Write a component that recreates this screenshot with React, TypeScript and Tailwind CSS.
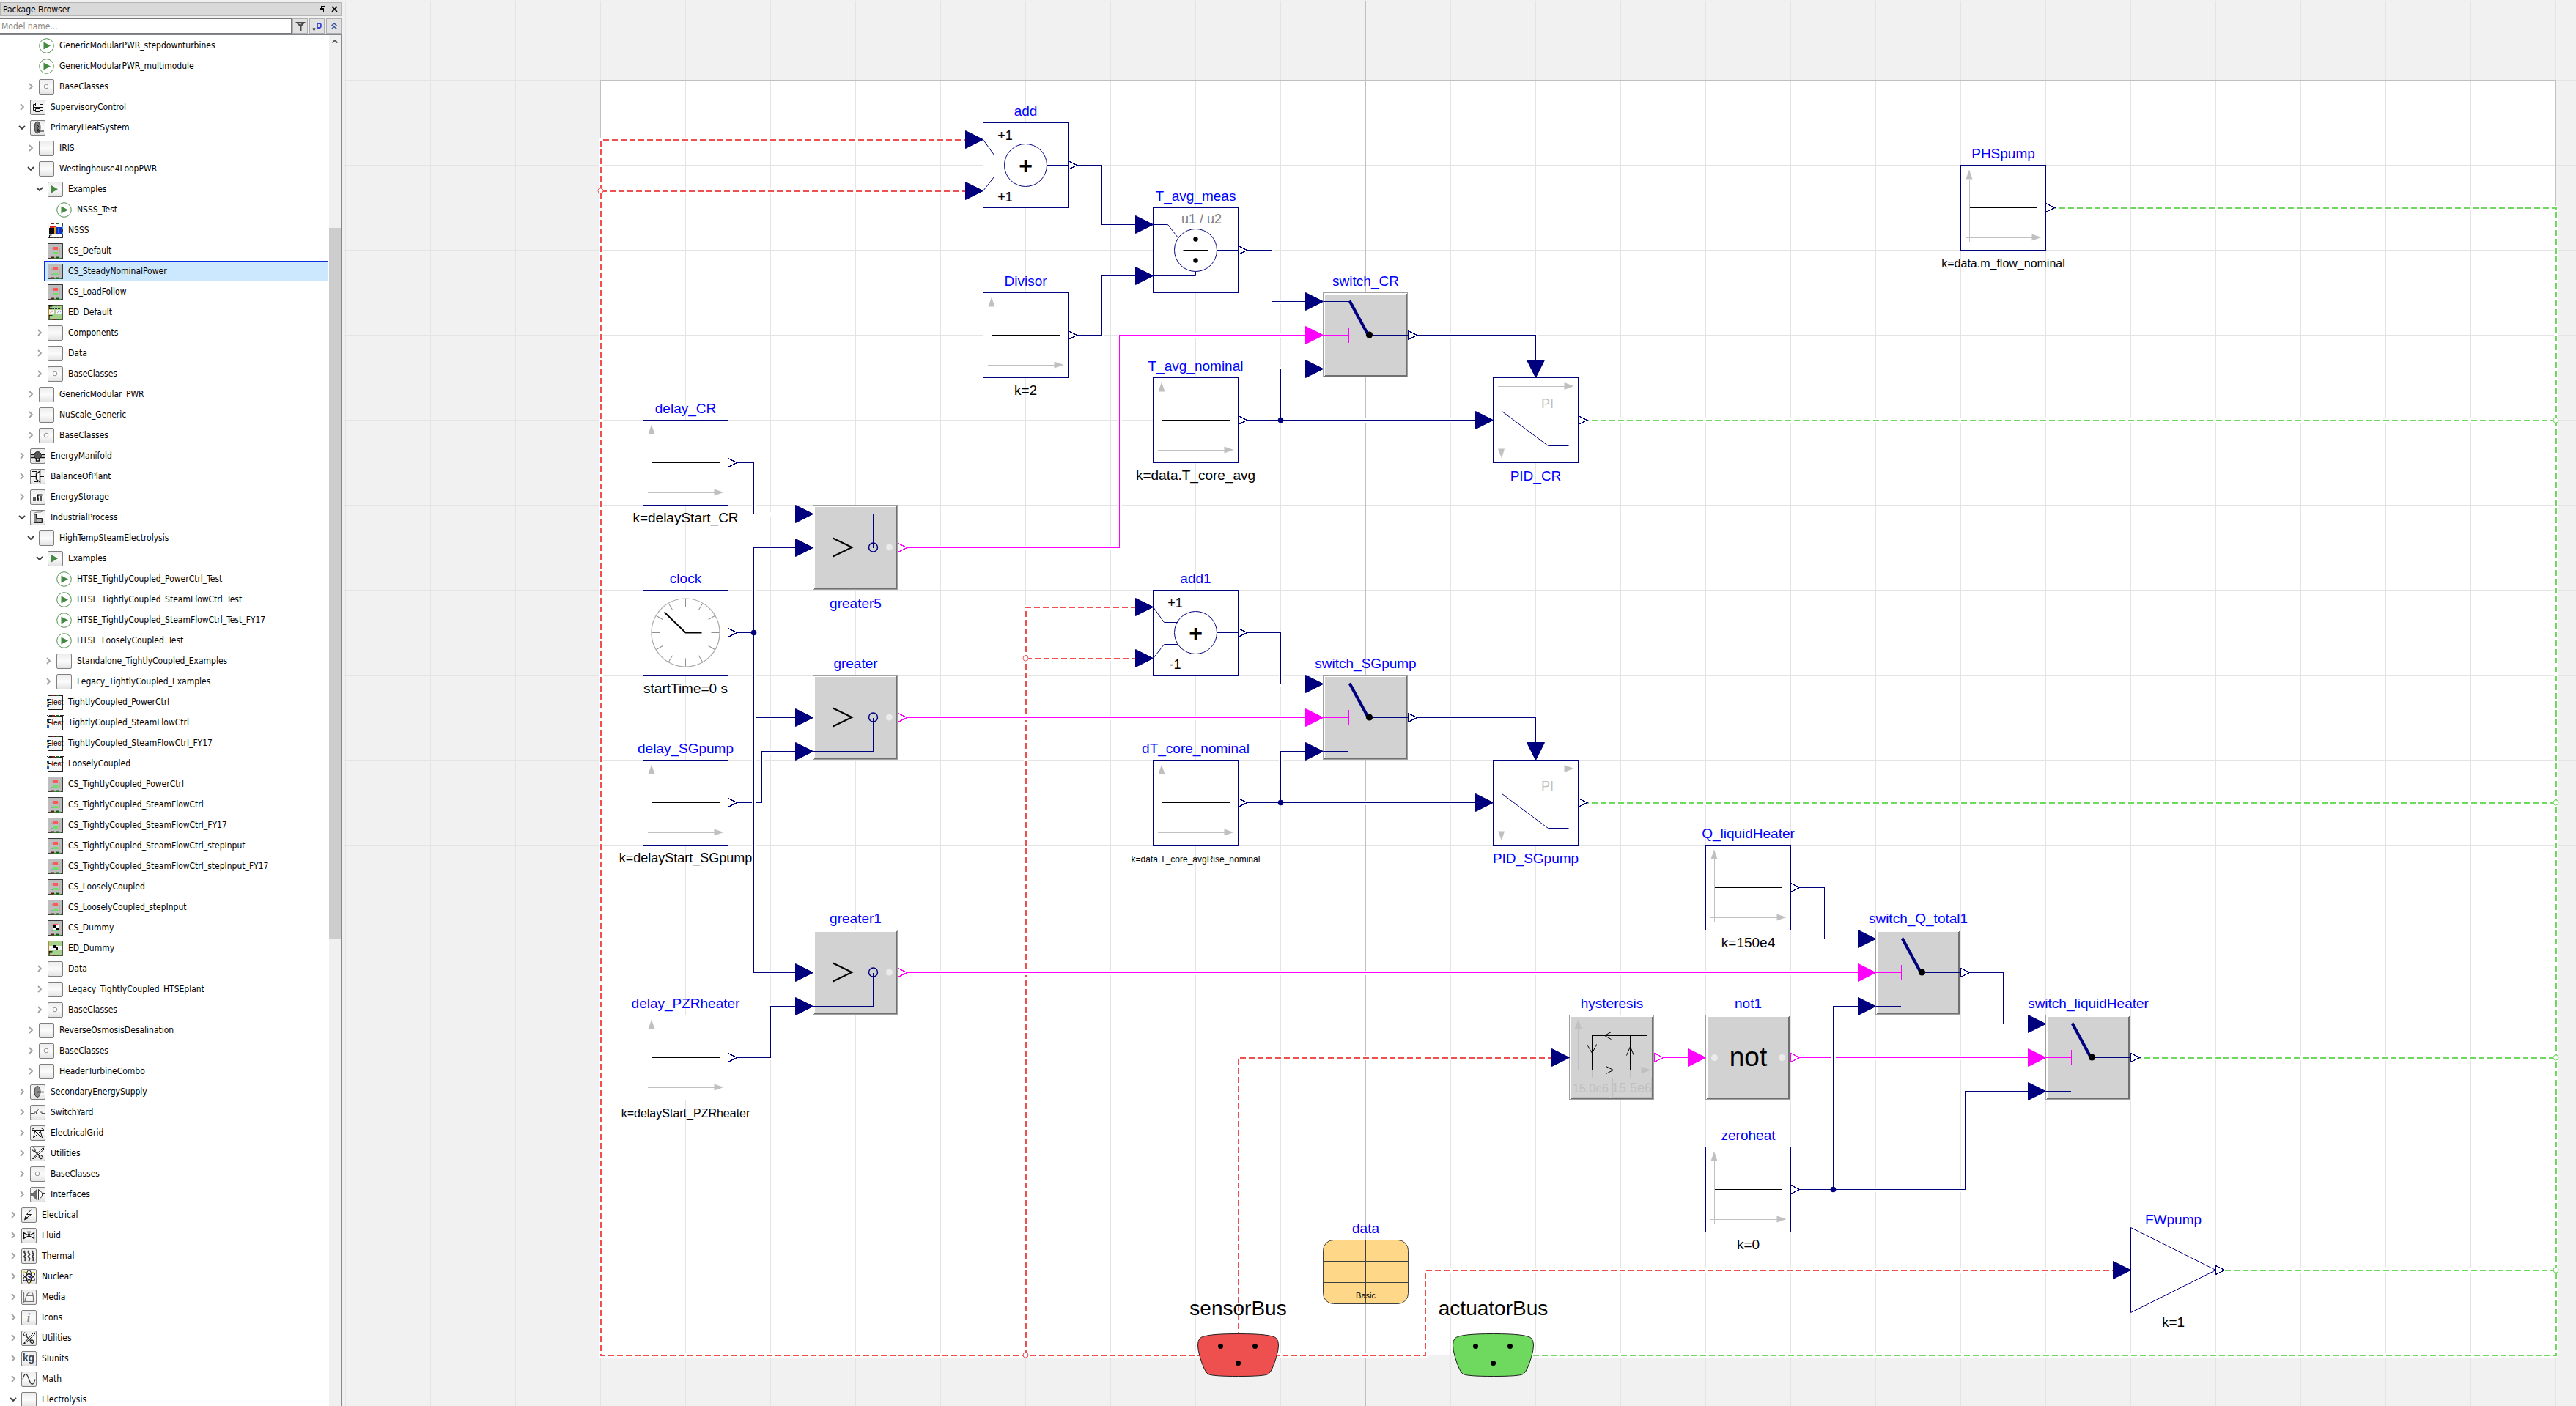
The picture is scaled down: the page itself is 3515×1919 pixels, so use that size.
import React from "react";

/* ------------------------------------------------------------------ */
/* Package browser                                                     */
/* ------------------------------------------------------------------ */

type IconKind =
  | "run" | "base" | "empty" | "supervisory" | "primary" | "examples" | "nsss" | "cs" | "ed"
  | "manifold" | "plant" | "storage" | "industrial" | "elect" | "csDummy" | "edDummy"
  | "supply" | "switch" | "grid" | "tools" | "interfaces" | "electrical" | "fluid"
  | "thermal" | "nuclear" | "media" | "info" | "units" | "math";

type Row = { d: 1 | 2 | 3 | 4 | 5; a: "" | ">" | "v"; i: IconKind; t: string; sel?: boolean };

const r = (d: Row["d"], a: Row["a"], i: IconKind, t: string, sel?: boolean): Row => ({ d, a, i, t, sel });

const rows: Row[] = [
  r(3, "", "run", "GenericModularPWR_stepdownturbines"),
  r(3, "", "run", "GenericModularPWR_multimodule"),
  r(3, ">", "base", "BaseClasses"),
  r(2, ">", "supervisory", "SupervisoryControl"),
  r(2, "v", "primary", "PrimaryHeatSystem"),
  r(3, ">", "empty", "IRIS"),
  r(3, "v", "empty", "Westinghouse4LoopPWR"),
  r(4, "v", "examples", "Examples"),
  r(5, "", "run", "NSSS_Test"),
  r(4, "", "nsss", "NSSS"),
  r(4, "", "cs", "CS_Default"),
  r(4, "", "cs", "CS_SteadyNominalPower", true),
  r(4, "", "cs", "CS_LoadFollow"),
  r(4, "", "ed", "ED_Default"),
  r(4, ">", "empty", "Components"),
  r(4, ">", "empty", "Data"),
  r(4, ">", "base", "BaseClasses"),
  r(3, ">", "empty", "GenericModular_PWR"),
  r(3, ">", "empty", "NuScale_Generic"),
  r(3, ">", "base", "BaseClasses"),
  r(2, ">", "manifold", "EnergyManifold"),
  r(2, ">", "plant", "BalanceOfPlant"),
  r(2, ">", "storage", "EnergyStorage"),
  r(2, "v", "industrial", "IndustrialProcess"),
  r(3, "v", "empty", "HighTempSteamElectrolysis"),
  r(4, "v", "examples", "Examples"),
  r(5, "", "run", "HTSE_TightlyCoupled_PowerCtrl_Test"),
  r(5, "", "run", "HTSE_TightlyCoupled_SteamFlowCtrl_Test"),
  r(5, "", "run", "HTSE_TightlyCoupled_SteamFlowCtrl_Test_FY17"),
  r(5, "", "run", "HTSE_LooselyCoupled_Test"),
  r(5, ">", "empty", "Standalone_TightlyCoupled_Examples"),
  r(5, ">", "empty", "Legacy_TightlyCoupled_Examples"),
  r(4, "", "elect", "TightlyCoupled_PowerCtrl"),
  r(4, "", "elect", "TightlyCoupled_SteamFlowCtrl"),
  r(4, "", "elect", "TightlyCoupled_SteamFlowCtrl_FY17"),
  r(4, "", "elect", "LooselyCoupled"),
  r(4, "", "cs", "CS_TightlyCoupled_PowerCtrl"),
  r(4, "", "cs", "CS_TightlyCoupled_SteamFlowCtrl"),
  r(4, "", "cs", "CS_TightlyCoupled_SteamFlowCtrl_FY17"),
  r(4, "", "cs", "CS_TightlyCoupled_SteamFlowCtrl_stepInput"),
  r(4, "", "cs", "CS_TightlyCoupled_SteamFlowCtrl_stepInput_FY17"),
  r(4, "", "cs", "CS_LooselyCoupled"),
  r(4, "", "cs", "CS_LooselyCoupled_stepInput"),
  r(4, "", "csDummy", "CS_Dummy"),
  r(4, "", "edDummy", "ED_Dummy"),
  r(4, ">", "empty", "Data"),
  r(4, ">", "empty", "Legacy_TightlyCoupled_HTSEplant"),
  r(4, ">", "base", "BaseClasses"),
  r(3, ">", "empty", "ReverseOsmosisDesalination"),
  r(3, ">", "base", "BaseClasses"),
  r(3, ">", "empty", "HeaderTurbineCombo"),
  r(2, ">", "supply", "SecondaryEnergySupply"),
  r(2, ">", "switch", "SwitchYard"),
  r(2, ">", "grid", "ElectricalGrid"),
  r(2, ">", "tools", "Utilities"),
  r(2, ">", "base", "BaseClasses"),
  r(2, ">", "interfaces", "Interfaces"),
  r(1, ">", "electrical", "Electrical"),
  r(1, ">", "fluid", "Fluid"),
  r(1, ">", "thermal", "Thermal"),
  r(1, ">", "nuclear", "Nuclear"),
  r(1, ">", "media", "Media"),
  r(1, ">", "info", "Icons"),
  r(1, ">", "tools", "Utilities"),
  r(1, ">", "units", "SIunits"),
  r(1, ">", "math", "Math"),
  r(1, "v", "empty", "Electrolysis"),
];

const indent: Record<Row["d"], string> = { 1: "ml-3", 2: "ml-6", 3: "ml-9", 4: "ml-12", 5: "ml-[60px]" };

const Folder = () => (
  <>
    <rect x="0.5" y="0.5" width="20" height="20" rx="1.5" fill="url(#folder)" stroke="#808080" />
  </>
);

const CsBody = () => (
  <>
    <rect x="0.5" y="0.5" width="20" height="20" fill="#bdbdbd" stroke="#3a3a3a" />
    <path d="M7 7H4.500V14.500H7" fill="none" stroke="#9aa0b4" />
    <path d="M14 7h2.500V14.500H14" fill="none" stroke="#b4b09a" />
    <rect x="7" y="5" width="7" height="4" fill="#f95a5a" />
    <rect x="7" y="12" width="7" height="3" fill="#6ee06a" />
    <path d="M4 20h14" stroke="#4fd048" />
    <path d="M5 19.500h4" stroke="#5a1a1a" strokeWidth="2" />
    <path d="M11 19.500h4" stroke="#1f4d1f" strokeWidth="2" />
  </>
);

const EdBody = () => (
  <>
    <rect x="0.5" y="0.5" width="20" height="20" fill="#a8d08d" stroke="#4c5a40" />
    <path d="M1.500 1v19" stroke="#b08a30" strokeWidth="1" />
    <text x="1" y="20" fontSize="9" fill="#000" className="font-['Liberation_Sans']">E</text>
    <path d="M7 20h4" stroke="#7a2020" strokeWidth="2" />
    <path d="M12 20h4" stroke="#206020" strokeWidth="2" />
  </>
);

function NodeIcon({ kind }: { kind: IconKind }) {
  const line = { fill: "none", stroke: "#111", strokeWidth: 1 } as const;
  let body: React.ReactNode = null;
  switch (kind) {
    case "run":
      body = (
        <>
          <circle cx="10.500" cy="10.500" r="9.800" fill="#fff" stroke="#4c8f4a" />
          <path d="M6.500 5.500v10l9.500-5z" fill="#458a42" />
        </>
      );
      break;
    case "empty":
      body = <Folder />;
      break;
    case "base":
      body = <><Folder /><circle cx="10" cy="10" r="2.800" fill="#fff" stroke="#909090" /></>;
      break;
    case "examples":
      body = <><Folder /><path d="M5 5v10.500l9-5.200z" fill="#458a42" /></>;
      break;
    case "supervisory":
      body = (
        <>
          <Folder />
          <path d="M7.500 4.500h6v4h-6zM7.500 12.500h6v4h-6zM7.500 6.500H4.500V14.500H7.500M13.500 6.500H17.500V14.500H13.500M5 10.500h12" {...line} />
        </>
      );
      break;
    case "primary":
      body = (
        <>
          <Folder />
          <ellipse cx="10" cy="10" rx="4" ry="8" fill="#7a7a7a" stroke="#333" />
          <path d="M19 6.500h-9l2 2.500-3 2 3 2-2 2h9" {...line} />
        </>
      );
      break;
    case "nsss":
      body = (
        <>
          <rect x="0.5" y="0.5" width="20" height="20" fill="#fff" stroke="#333" />
          <path d="M5 1h4" stroke="#7a2020" strokeWidth="2" />
          <path d="M12 1h4" stroke="#206020" strokeWidth="2" />
          <path d="M3 6h9" stroke="#e02020" strokeWidth="2" />
          <rect x="2" y="7" width="7" height="8" fill="#0b0b0b" />
          <rect x="9" y="6" width="3" height="9" fill="#e0a020" />
          <rect x="12" y="6" width="7" height="9" fill="#1030c0" />
          <path d="M15 7v7" stroke="#60b0ff" />
          <path d="M19 5h2v3h-2zM19 13h2v3h-2z" fill="#3aa0ff" />
          <path d="M2.500 21v-4h3" {...line} />
          <path d="M7 20.500h10" stroke="#555" strokeDasharray="2 2" />
        </>
      );
      break;
    case "cs":
      body = <CsBody />;
      break;
    case "csDummy":
      body = (
        <>
          <CsBody />
          <rect x="7" y="6" width="8" height="8" fill="#fff" />
          <path d="M7 6h4v4h-4zM11 10h4v4h-4z" fill="#000" />
          <path d="M15.500 6v8" stroke="#d8d020" />
        </>
      );
      break;
    case "ed":
      body = (
        <>
          <EdBody />
          <rect x="2" y="7" width="7" height="6" fill="#fdf3f0" />
          <rect x="12" y="7" width="7" height="6" fill="#f3f2ff" />
          <path d="M3 11l3-2 2 1" stroke="#f0a0a0" fill="none" />
          <path d="M13 11l3-3 2 2" stroke="#a0a0f0" fill="none" />
          <text x="1" y="6" fontSize="9" fill="#000" className="font-['Liberation_Sans']">E</text>
          <path d="M8 5.500h10" stroke="#333" strokeDasharray="1 1" />
        </>
      );
      break;
    case "edDummy":
      body = (
        <>
          <EdBody />
          <rect x="2" y="7" width="17" height="5" fill="#f6f0fa" />
          <path d="M7 6h4v4h-4zM11 9h3v4h-3z" fill="#000" />
          <path d="M15.500 7v5" stroke="#d8d020" />
        </>
      );
      break;
    case "manifold":
      body = (
        <>
          <Folder />
          <circle cx="10.500" cy="9.500" r="5" fill="#555" stroke="#222" />
          <path d="M1 8.500h4M1 12.500h6M14 12.500h6M16 8.500h4M8.500 13v4h4v-4" {...line} strokeWidth={1.5} />
        </>
      );
      break;
    case "plant":
      body = (
        <>
          <Folder />
          <path d="M8.500 7l5-4v15l-5-4z" fill="#fff" stroke="#111" strokeWidth="1.500" />
          <path d="M3 3.500h6V7M1 10.500h7M14 10.500h5M5 17.500h6" {...line} />
        </>
      );
      break;
    case "storage":
      body = (
        <>
          <Folder />
          <path d="M4 11h4v5H4zM9 12h3v4H9zM13 9h3v7h-3z" fill="#555" />
          <path d="M10.500 14V7.500h6" {...line} strokeWidth={2} />
        </>
      );
      break;
    case "industrial":
      body = (
        <>
          <Folder />
          <path d="M5.500 17.500V6h3v5.500h8v6z" fill="#8a8a8a" stroke="#222" />
          <path d="M6 4l4-1 4 0 3-1" stroke="#888" fill="none" />
          <rect x="9" y="12.500" width="6" height="3" fill="#bbb" />
        </>
      );
      break;
    case "elect":
      body = (
        <>
          <rect x="0.5" y="1.5" width="20" height="19" fill="#f4f6f8" stroke="#222" />
          <path d="M-1 0.500h23" stroke="#222" strokeDasharray="2 1" />
          <path d="M6 1h4" stroke="#7a2020" strokeWidth="2" />
          <path d="M12 1h4" stroke="#206020" strokeWidth="2" />
          <path d="M-1 6h3v3h-3zM-1 14h3v3h-3z" fill="#1a5fc0" />
          <text x="-1" y="14" fontSize="10" fill="#000" className="font-['Liberation_Sans']">Elect</text>
          <circle cx="6" cy="11" r="1" fill="#d02020" />
          <circle cx="17" cy="11" r="1" fill="#d02020" />
          <path d="M4.500 15v5.500M6 20.500h9" stroke="#222" strokeDasharray="3 1" />
        </>
      );
      break;
    case "supply":
      body = (
        <>
          <Folder />
          <ellipse cx="10" cy="10" rx="4" ry="7.500" fill="#8c8c8c" stroke="#333" />
          <path d="M10 10.500h9" {...line} strokeWidth={1.5} />
        </>
      );
      break;
    case "switch":
      body = (
        <>
          <Folder />
          <path d="M1 11.500h5M8.500 10l3-4M16 11.500h4" fill="none" stroke="#555" />
          <rect x="6" y="10" width="2.500" height="2.500" fill="#fff" stroke="#555" />
          <rect x="13.500" y="10" width="2.500" height="2.500" fill="#fff" stroke="#555" />
        </>
      );
      break;
    case "grid":
      body = (
        <>
          <Folder />
          <path d="M2.500 7V5.500L6 3.500h9l3.500 2V7M3 6.500h15M7 7L4.500 17M14 7l2.500 10M7 8l8 8M14 8l-8 8M7 7h7" {...line} />
        </>
      );
      break;
    case "tools":
      body = (
        <>
          <Folder />
          <path d="M3.500 17.500L16.500 3.500l2-.5v2L5 17.500z" fill="#fff" stroke="#111" />
          <path d="M6 7l7 7" stroke="#333" strokeWidth="1.500" />
          <path d="M2.500 3.500l1.500 3.500 3 .5.500-2.500-3-2.500" {...line} />
          <rect x="12.500" y="13" width="4" height="4.500" rx="1" fill="#ddd" stroke="#111" transform="rotate(-45 14.500 15)" />
        </>
      );
      break;
    case "interfaces":
      body = (
        <>
          <Folder />
          <path d="M1 8h3l5-5v15l-5-5H1z" fill="#6b6b6b" />
          <path d="M11.500 3.500l5 4.500v5l-5 4.500zM16.500 8.500H20M16.500 12.500H20" fill="#fff" stroke="#333" />
        </>
      );
      break;
    case "electrical":
      body = (
        <>
          <Folder />
          <path d="M14 2.500L7.500 9.500h6L6.500 15" {...line} />
          <path d="M4 17.500l1.500-6 4 3.500z" fill="#111" />
        </>
      );
      break;
    case "fluid":
      body = (
        <>
          <Folder />
          <path d="M3.500 6.500v8l14-8v8z M10.500 10V5.500M8 5.500h5" fill="none" stroke="#111" strokeWidth="1.300" />
          <circle cx="10.500" cy="9" r="1.800" fill="#222" />
        </>
      );
      break;
    case "thermal":
      body = (
        <>
          <Folder />
          <path
            d="M5 3l-1 2 2 3-2 3 2 3-1 3M10.500 3l-1 2 2 3-2 3 2 3-1 3M16 3l-1 2 2 3-2 3 2 3-1 3"
            fill="none"
            stroke="#444"
            strokeWidth="2"
          />
        </>
      );
      break;
    case "nuclear":
      body = (
        <>
          <Folder />
          <ellipse cx="10.500" cy="10.500" rx="3.500" ry="9" {...line} />
          <ellipse cx="10.500" cy="10.500" rx="3.500" ry="9" {...line} transform="rotate(60 10.500 10.500)" />
          <ellipse cx="10.500" cy="10.500" rx="3.500" ry="9" {...line} transform="rotate(120 10.500 10.500)" />
          <path d="M9 9h2v2h-2z" fill="#c02020" />
          <path d="M11 10h2v2h-2z" fill="#2030d0" />
          <path d="M3 3h2v2h-2zM15 4h2v2h-2zM13 17h2v2h-2z" fill="#e8d820" />
        </>
      );
      break;
    case "media":
      body = (
        <>
          <Folder />
          <path d="M3.500 18V3M5 17C6 8 9 3.500 13 3.500c3 0 4 6 3.500 13M3 16.500h15M6 8.500h10" fill="none" stroke="#777" strokeWidth="1.200" />
        </>
      );
      break;
    case "info":
      body = (
        <>
          <Folder />
          <text x="10" y="16" textAnchor="middle" fontSize="16" fontStyle="italic" fill="#8a8a8a" className="font-['Liberation_Serif'] font-bold">i</text>
        </>
      );
      break;
    case "units":
      body = (
        <>
          <Folder />
          <text x="10" y="14" textAnchor="middle" fontSize="14" fill="#444" className="font-['Liberation_Sans'] font-bold">kg</text>
        </>
      );
      break;
    case "math":
      body = (
        <>
          <Folder />
          <path d="M2 10.500C5 0 7.500 2 10.500 10.500S16 20 19 10.500" fill="none" stroke="#333" strokeWidth="1.300" />
        </>
      );
      break;
  }
  return (
    <svg viewBox="0 0 21 21" className="size-[21px] shrink-0 overflow-visible" aria-hidden="true">
      {body}
    </svg>
  );
}

function Arrow({ open }: { open: boolean }) {
  return (
    <svg viewBox="0 0 12 12" className="size-3" aria-hidden="true">
      {open ? (
        <path d="M2 4l4 4 4-4" fill="none" stroke="#3c3c3c" strokeWidth="1.800" />
      ) : (
        <path d="M4 2l4 4-4 4" fill="none" stroke="#a2a2a2" strokeWidth="1.800" />
      )}
    </svg>
  );
}

function TreeRow({ row }: { row: Row }) {
  return (
    <li className={`${indent[row.d]} flex h-7 items-center`}>
      {row.a ? (
        <button type="button" aria-label={`Toggle ${row.t}`} className="w-3 shrink-0">
          <Arrow open={row.a === "v"} />
        </button>
      ) : (
        <span className="w-3 shrink-0" />
      )}
      <button
        type="button"
        className={
          row.sel
            ? "flex h-full flex-1 items-center gap-[7px] border border-[#0a2ee0] bg-[#cce8ff] pl-1 text-left"
            : "flex h-full flex-1 items-center gap-[7px] pl-[5px] text-left"
        }
      >
        <NodeIcon kind={row.i} />
        <span className="whitespace-nowrap">{row.t}</span>
      </button>
    </li>
  );
}

function PackageBrowser() {
  return (
    <aside className="flex w-[466px] shrink-0 flex-col font-['DejaVu_Sans_Condensed','DejaVu_Sans',sans-serif] text-xs text-black">
      <svg className="absolute size-0" aria-hidden="true">
        <defs>
          <linearGradient id="folder" x1="0" y1="0" x2="0" y2="1">
            <stop offset="0" stopColor="#ececec" />
            <stop offset="0.5" stopColor="#fbfbfb" />
            <stop offset="1" stopColor="#e2e2e2" />
          </linearGradient>
        </defs>
      </svg>

      <header className="mt-px flex h-[19px] items-center justify-between border border-[#b4b4b4] bg-[#d9d9d9] pl-[3px] pr-1">
        <h1>Package Browser</h1>
        <div className="flex gap-2">
          <button type="button" aria-label="Float panel">
            <svg viewBox="0 0 8 9" className="h-[9px] w-2" shapeRendering="crispEdges">
              <path d="M2 0h6v6H6V5h1V2H3v1H2zM0 3h6v6H0zM1 5v3h4V5z" fill="#000" fillRule="evenodd" />
            </svg>
          </button>
          <button type="button" aria-label="Close panel">
            <svg viewBox="0 0 9 9" className="size-[9px]">
              <path d="M1 1l7 7M8 1l-7 7" stroke="#000" strokeWidth="1.600" />
            </svg>
          </button>
        </div>
      </header>

      <div className="mt-[3px] flex h-[21px] gap-px">
        <input
          type="text"
          aria-label="Model name"
          placeholder="Model name..."
          className="min-w-0 flex-1 border border-l-0 border-[#7a7a7a] bg-white pl-0.5 placeholder:text-[#8a8a8a]"
        />
        <div className="flex gap-0.5">
          <button type="button" aria-label="Filter" className="flex w-[21px] items-center justify-center border border-[#adadad] bg-[#e1e1e1]">
            <svg viewBox="0 0 14 12" className="h-3 w-3.5">
              <path d="M0 0h14L8.500 6v6H6V6z" fill="#4a4a4a" />
              <path d="M3 1h6L7 4z" fill="#c8c8c8" />
            </svg>
          </button>
          <button type="button" aria-label="Sort" className="flex w-[21px] items-center justify-center border border-[#adadad] bg-[#e1e1e1]">
            <svg viewBox="0 0 14 15" className="h-[15px] w-3.5">
              <path d="M2.500 0v12" stroke="#000" />
              <path d="M0.500 10.500h4L2.500 15z" fill="#000" />
              <path d="M7 4h2.500q2.500 0 2.500 3t-2.500 3H7z" fill="none" stroke="#3a44d4" strokeWidth="1.800" />
            </svg>
          </button>
          <button type="button" aria-label="Collapse all" className="flex w-[21px] items-center justify-center border border-[#adadad] bg-[#e1e1e1]">
            <svg viewBox="0 0 8 9" className="h-[9px] w-2">
              <path d="M0.500 4L4 1l3.500 3M0.500 8.500L4 5.500l3.500 3" fill="none" stroke="#2f4f9f" strokeWidth="1.400" />
            </svg>
          </button>
        </div>
      </div>

      <div className="mt-px flex min-h-0 flex-1 border-r border-t border-[#828790] bg-white">
        <ul className="min-w-0 flex-1 overflow-hidden pr-px">
          {rows.map((row, n) => (
            <TreeRow key={n} row={row} />
          ))}
        </ul>
        <div className="flex w-4 flex-col bg-[#f0f0f0]">
          <svg viewBox="0 0 8 5" className="mx-auto mt-1.5 h-[5px] w-2">
            <path d="M0.500 4.500L4 1l3.500 3.500" fill="none" stroke="#505050" strokeWidth="1.800" />
          </svg>
          <div className="mt-[252px] h-[970px] bg-[#cdcdcd]" />
        </div>
      </div>
    </aside>
  );
}

/* ------------------------------------------------------------------ */
/* Diagram                                                             */
/* ------------------------------------------------------------------ */

const NAVY = "#00007f";
const PINK = "#ff00ff";
const RED = "#ee5050";
const GREEN = "#6ed85f";
const GRAY = "#c0c0c0";

/* model units to screen pixels */
const px = (u: number) => Math.round(u * 5.8);
type Pt = [number, number];
const pts = (list: Pt[]) => list.map(([x, y]) => `${px(x)},${px(-y)}`).join(" ");

function Grid() {
  const lines: React.ReactNode[] = [];
  for (let u = -240; u <= 280; u += 20) {
    if (u !== 0) lines.push(<line key={`v${u}`} x1={px(u)} x2={px(u)} y1={-1270} y2={650} stroke="#e4e4e4" />);
  }
  for (let u = -100; u <= 200; u += 20) {
    if (u !== 0) lines.push(<line key={`h${u}`} y1={px(u * -1)} y2={px(u * -1)} x1={-1394} x2={1652} stroke="#e4e4e4" />);
  }
  return (
    <g shapeRendering="crispEdges">
      <rect x={px(-180)} y={px(-200)} width={px(460)} height={px(300)} fill="#fff" />
      {lines}
      <line x1="0" x2="0" y1={-1270} y2={650} stroke={GRAY} />
      <line y1="0" y2="0" x1={-1394} x2={1652} stroke={GRAY} />
      <rect x={px(-180)} y={px(-200)} width={px(460)} height={px(300)} fill="none" stroke={GRAY} />
    </g>
  );
}

function Wire({ p, color = NAVY, bus }: { p: Pt[]; color?: string; bus?: boolean }) {
  return (
    <g fill="none" shapeRendering="crispEdges">
      <polyline points={pts(p)} stroke="#fff" strokeWidth="6" />
      <polyline
        points={pts(p)}
        stroke={color}
        strokeWidth={bus ? 2 : 1}
        strokeDasharray={bus ? "8 4" : undefined}
      />
    </g>
  );
}

const wires: { p: Pt[]; color?: string; bus?: boolean }[] = [
  { p: [[280, 120], [280, -100], [30, -100]], color: GREEN, bus: true },
  { p: [[161, 170], [280, 170], [280, 120]], color: GREEN, bus: true },
  { p: [[51, 120], [280, 120]], color: GREEN, bus: true },
  { p: [[51, 30], [280, 30]], color: GREEN, bus: true },
  { p: [[181, -30], [280, -30]], color: GREEN, bus: true },
  { p: [[202, -80], [280, -80]], color: GREEN, bus: true },
  { p: [[-30, -100], [-180, -100], [-180, 186], [-92, 186]], color: RED, bus: true },
  { p: [[-180, 174], [-92, 174]], color: RED, bus: true },
  { p: [[-80, -100], [-80, 76], [-52, 76]], color: RED, bus: true },
  { p: [[-80, 64], [-52, 64]], color: RED, bus: true },
  { p: [[-69, 180], [-62, 180], [-62, 166], [-52, 166]] },
  { p: [[-69, 140], [-62, 140], [-62, 154], [-52, 154]] },
  { p: [[-29, 160], [-22, 160], [-22, 148], [-12, 148]] },
  { p: [[-109, 90], [-58, 90], [-58, 140], [-12, 140]], color: PINK },
  { p: [[-29, 120], [28, 120]] },
  { p: [[-20, 120], [-20, 132], [-12, 132]] },
  { p: [[11, 140], [40, 140], [40, 132]] },
  { p: [[-29, 70], [-20, 70], [-20, 58], [-12, 58]] },
  { p: [[-109, 50], [-12, 50]], color: PINK },
  { p: [[-29, 30], [28, 30]] },
  { p: [[-20, 30], [-20, 42], [-12, 42]] },
  { p: [[11, 50], [40, 50], [40, 42]] },
  { p: [[-149, 110], [-144, 110], [-144, 98], [-132, 98]] },
  { p: [[-144, 50], [-132, 50]] },
  { p: [[-149, 30], [-142, 30], [-142, 42], [-132, 42]] },
  { p: [[-144, 70], [-144, -10], [-132, -10]] },
  { p: [[-149, 70], [-144, 70], [-144, 90], [-132, 90]] },
  { p: [[-149, -30], [-140, -30], [-140, -18], [-132, -18]] },
  { p: [[-109, -10], [118, -10]], color: PINK },
  { p: [[101, 10], [108, 10], [108, -2], [118, -2]] },
  { p: [[69, -30], [78, -30]], color: PINK },
  { p: [[101, -30], [158, -30]], color: PINK },
  { p: [[101, -61], [141, -61], [141, -38], [158, -38]] },
  { p: [[110, -61], [110, -18], [118, -18]] },
  { p: [[141, -10], [150, -10], [150, -22], [158, -22]] },
  { p: [[-30, -100], [-30, -30], [46, -30]], color: RED, bus: true },
  { p: [[-30, -100], [14, -100], [14, -80], [178, -80]], color: RED, bus: true },
];

function Joint({ x, y, color, open }: { x: number; y: number; color: string; open?: boolean }) {
  return (
    <circle cx={px(x)} cy={px(-y)} r={open ? 3.5 : 3.8} fill={open ? "#fff" : color} stroke={color} strokeWidth={open ? 1 : 0} />
  );
}

/* Connector triangles; coordinates are pixels relative to the block's centre. */
const InPort = ({ y = 0, color = NAVY }: { y?: number; color?: string }) => (
  <polygon points={`-82,${y - 12} -58,${y} -82,${y + 12}`} fill={color} stroke={color} />
);
const OutPort = ({ color = NAVY }: { color?: string }) => (
  <polygon points="58,-6 70,0 58,6" fill="#fff" stroke={color} shapeRendering="crispEdges" />
);

function At({ x, y, children }: { x: number; y: number; children: React.ReactNode }) {
  return <g transform={`translate(${px(x)} ${px(-y)})`}>{children}</g>;
}

function Caption({ y, size = 19, color = "#0000ff", x = 0, children }: { y: number; size?: number; color?: string; x?: number; children: string }) {
  return (
    <text x={x} y={y} textAnchor="middle" fontSize={size} fill={color}>
      {children}
    </text>
  );
}

const Box = () => <rect x="-58" y="-58" width="116" height="116" fill="#fff" stroke={NAVY} shapeRendering="crispEdges" />;

const Raised = () => (
  <g shapeRendering="crispEdges" stroke="none">
    <rect x="-58.500" y="-58.500" width="116" height="116" fill="#a0a0a0" />
    <rect x="-57.500" y="-57.500" width="114" height="114" fill="#fff" />
    <path d="M56.500-57.500V56.500H-57.500l2-2H54.500V-55.500z" fill="#707070" />
    <rect x="-55.500" y="-55.500" width="110" height="110" fill="#d2d2d2" />
  </g>
);

function Constant({ x, y, name, value, size = 19 }: { x: number; y: number; name: string; value: string; size?: number }) {
  return (
    <At x={x} y={y}>
      <Box />
      <g stroke={GRAY} shapeRendering="crispEdges">
        <path d="M-46-39V46M-52 41H48" fill="none" />
      </g>
      <path d="M-46.500-52l-4.500 13h9zM52 40.500l-13-4.500v9z" fill={GRAY} />
      <path d="M-46 0H46" stroke="#000" shapeRendering="crispEdges" />
      <OutPort />
      <Caption y={-68}>{name}</Caption>
      <Caption y={81} size={size} color="#000">{value}</Caption>
    </At>
  );
}

function Add({ x, y, name, k2 }: { x: number; y: number; name: string; k2: string }) {
  return (
    <At x={x} y={y}>
      <Box />
      <g fill="none" stroke={NAVY}>
        <circle r="29" />
        <path d="M-58-35l15 21h18M-58 35l15-19h19M29 0h29" />
      </g>
      <text x="0" y="11" textAnchor="middle" fontSize="32" fill="#000" className="font-bold">+</text>
      <Caption x={-28} y={-35} size={18} color="#000">+1</Caption>
      <Caption x={-28} y={49} size={18} color="#000">{k2}</Caption>
      <InPort y={-35} />
      <InPort y={35} />
      <OutPort />
      <Caption y={-68}>{name}</Caption>
    </At>
  );
}

function Division() {
  return (
    <At x={-40} y={160}>
      <Box />
      <g fill="none" stroke={NAVY}>
        <circle r="29" />
        <path d="M-58-35h20l14 18M-58 35H0v-6M29 0h29" />
      </g>
      <circle cy="-15" r="3.200" />
      <circle cy="14" r="3.200" />
      <path d="M-17 0h34" stroke="#000" />
      <Caption x={8} y={-37} size={18} color="#808080">u1 / u2</Caption>
      <InPort y={-35} />
      <InPort y={35} />
      <OutPort />
      <Caption y={-68}>T_avg_meas</Caption>
    </At>
  );
}

function Switch({ x, y, name }: { x: number; y: number; name: string }) {
  return (
    <At x={x} y={y}>
      <Raised />
      <g fill="none" shapeRendering="crispEdges">
        <path d="M-58-46h35M-58 46h34M9 0h49" stroke={NAVY} />
        <path d="M-58 0h35M-23-11v21" stroke={PINK} />
      </g>
      <path d="M-22-47L3-1" stroke={NAVY} strokeWidth="4" fill="none" />
      <circle cx="5" cy="-0.500" r="4.600" />
      <InPort y={-46} />
      <InPort color={PINK} />
      <InPort y={46} />
      <OutPort />
      <Caption y={-68}>{name}</Caption>
    </At>
  );
}

function Greater({ x, y, name, flip }: { x: number; y: number; name: string; flip?: boolean }) {
  const k = flip ? -46 : 46;
  return (
    <At x={x} y={y}>
      <Raised />
      <path d="M-31-13L-5-0.500L-31 12" fill="none" stroke="#000" strokeWidth="2" />
      <circle cx="24" cy="-0.500" r="6" fill="none" stroke={NAVY} strokeWidth="1.500" />
      <path d={`M-58 ${k}H24V0`} fill="none" stroke={NAVY} shapeRendering="crispEdges" />
      <circle cx="46" cy="-0.500" r="4.500" fill="#ebebeb" />
      <InPort y={k} />
      <InPort />
      <OutPort color={PINK} />
      <Caption y={flip ? 82 : -68}>{name}</Caption>
    </At>
  );
}

function Clock() {
  return (
    <At x={-160} y={70}>
      <Box />
      <circle r="46.500" fill="none" stroke="#a8a8a8" strokeWidth="1.200" />
      {Array.from({ length: 12 }, (_, n) => (
        <line key={n} y1="-46" y2={n % 3 === 0 ? -35 : -36} stroke="#909090" transform={`rotate(${n * 30})`} />
      ))}
      <path d="M-29-28L0 0h22" fill="none" stroke="#000" strokeWidth="2" />
      <OutPort />
      <Caption y={-68}>clock</Caption>
      <Caption y={82} color="#000">startTime=0 s</Caption>
    </At>
  );
}

function Pid({ x, y, name }: { x: number; y: number; name: string }) {
  return (
    <At x={x} y={y}>
      <Box />
      <path d="M-46-52V40M-52-46H42" stroke={GRAY} fill="none" shapeRendering="crispEdges" />
      <path d="M-46.500 52l-5-13h9zM52-46.500l-13-5v10z" fill={GRAY} />
      <path d="M-46-46v34L17 35h28" stroke={NAVY} fill="none" />
      <Caption x={16} y={-17} size={18} color={GRAY}>PI</Caption>
      <InPort />
      <polygon points="-12,-82 12,-82 0,-58" fill={NAVY} stroke={NAVY} />
      <OutPort />
      <Caption y={82}>{name}</Caption>
    </At>
  );
}

function Hysteresis() {
  return (
    <At x={58} y={-30}>
      <Raised />
      <g shapeRendering="crispEdges" fill="none" stroke={GRAY}>
        <path d="M-46 17V-40M25 17H42M-27 17v11M25 17v11" />
        <rect x="-53" y="28" width="49" height="26" />
        <rect x="1" y="28" width="53" height="26" />
      </g>
      <path d="M-46-52l-5 13h10zM53 17l-13-5v10z" fill={GRAY} />
      <path d="M-46 17H25V-30M47-30H-27V17" stroke="#000" fill="none" shapeRendering="crispEdges" />
      <path d="M-1-35l-9 5 9 5M-8 12l10 5-10 5M-34-18l7 12 6-12M20-3l5-12 5 12" stroke="#000" fill="none" />
      <Caption x={-29} y={47} size={16} color={GRAY}>15.0e6</Caption>
      <Caption x={27} y={47} size={18} color={GRAY}>15.5e6</Caption>
      <InPort />
      <OutPort color={PINK} />
      <Caption y={-68}>hysteresis</Caption>
    </At>
  );
}

function Not() {
  return (
    <At x={90} y={-30}>
      <Raised />
      <circle cx="-46" r="4.500" fill="#ebebeb" />
      <circle cx="46" r="4.500" fill="#ebebeb" />
      <Caption y={11} size={37} color="#000">not</Caption>
      <InPort color={PINK} />
      <OutPort color={PINK} />
      <Caption y={-68}>not1</Caption>
    </At>
  );
}

function Gain() {
  return (
    <At x={190} y={-80}>
      <path d="M-58-58L58 0L-58 58z" fill="#fff" stroke={NAVY} />
      <InPort />
      <OutPort />
      <Caption y={-63}>FWpump</Caption>
      <Caption y={77} color="#000">k=1</Caption>
    </At>
  );
}

function DataRecord() {
  return (
    <At x={0} y={-78}>
      <rect x="-58" y="-29" width="116" height="87" rx="14" fill="#ffd788" stroke="#404040" />
      <path d="M-58 0H58M-58 29H58M0-29V58" stroke="#404040" fill="none" />
      <Caption y={-39}>data</Caption>
      <Caption y={50} size={11} color="#000">Basic</Caption>
    </At>
  );
}

function Bus({ x, name, fill }: { x: number; name: string; fill: string }) {
  return (
    <At x={x} y={-100}>
      <path
        d="M0-29Q46-29 52-23Q58-17 52 3Q46 23 41 26Q35 29 0 29Q-35 29-41 26Q-46 23-52 3Q-58-17-52-23Q-46-29 0-29z"
        fill={fill}
        stroke="#202020"
      />
      <circle cx="-24" cy="-12" r="3.500" />
      <circle cx="23" cy="-12" r="3.500" />
      <circle cy="11" r="3.500" />
      <Caption y={-55} size={28} color="#000">{name}</Caption>
    </At>
  );
}

function Diagram() {
  return (
    <main className="min-w-0 flex-1 overflow-hidden bg-[#f1f1f1]">
      <svg className="block h-full w-full font-['Liberation_Sans',Arial,sans-serif]" role="img" aria-label="Control system diagram">
        <g transform="translate(1393.5 1267.5)">
          <Grid />
          {wires.map((w, n) => (
            <Wire key={n} {...w} />
          ))}
          <Joint x={-20} y={120} color={NAVY} />
          <Joint x={-20} y={30} color={NAVY} />
          <Joint x={-144} y={70} color={NAVY} />
          <Joint x={110} y={-61} color={NAVY} />
          <Joint x={-180} y={174} color={RED} open />
          <Joint x={-80} y={64} color={RED} open />
          <Joint x={-80} y={-100} color={RED} open />
          <Joint x={280} y={120} color={GREEN} open />
          <Joint x={280} y={30} color={GREEN} open />
          <Joint x={280} y={-30} color={GREEN} open />
          <Joint x={280} y={-80} color={GREEN} open />

          <Add x={-80} y={180} name="add" k2="+1" />
          <Add x={-40} y={70} name="add1" k2="-1" />
          <Division />
          <Constant x={-80} y={140} name="Divisor" value="k=2" />
          <Constant x={-40} y={120} name="T_avg_nominal" value="k=data.T_core_avg" />
          <Constant x={-40} y={30} name="dT_core_nominal" value="k=data.T_core_avgRise_nominal" size={12} />
          <Constant x={-160} y={110} name="delay_CR" value="k=delayStart_CR" />
          <Constant x={-160} y={30} name="delay_SGpump" value="k=delayStart_SGpump" size={18} />
          <Constant x={-160} y={-30} name="delay_PZRheater" value="k=delayStart_PZRheater" size={16} />
          <Constant x={150} y={170} name="PHSpump" value="k=data.m_flow_nominal" size={16} />
          <Constant x={90} y={10} name="Q_liquidHeater" value="k=150e4" />
          <Constant x={90} y={-61} name="zeroheat" value="k=0" />
          <Clock />
          <Greater x={-120} y={90} name="greater5" flip />
          <Greater x={-120} y={50} name="greater" />
          <Greater x={-120} y={-10} name="greater1" />
          <Switch x={0} y={140} name="switch_CR" />
          <Switch x={0} y={50} name="switch_SGpump" />
          <Switch x={130} y={-10} name="switch_Q_total1" />
          <Switch x={170} y={-30} name="switch_liquidHeater" />
          <Pid x={40} y={120} name="PID_CR" />
          <Pid x={40} y={30} name="PID_SGpump" />
          <Hysteresis />
          <Not />
          <Gain />
          <DataRecord />
          <Bus x={-30} name="sensorBus" fill={RED} />
          <Bus x={30} name="actuatorBus" fill={GREEN} />
        </g>
      </svg>
    </main>
  );
}

export default function App() {
  return (
    <div className="flex h-screen flex-col overflow-hidden bg-[#f0f0f0]">
      <div className="mt-px h-px shrink-0 bg-[#b4b4b4]" />
      <div className="flex min-h-0 flex-1 gap-1">
        <PackageBrowser />
        <Diagram />
      </div>
    </div>
  );
}
